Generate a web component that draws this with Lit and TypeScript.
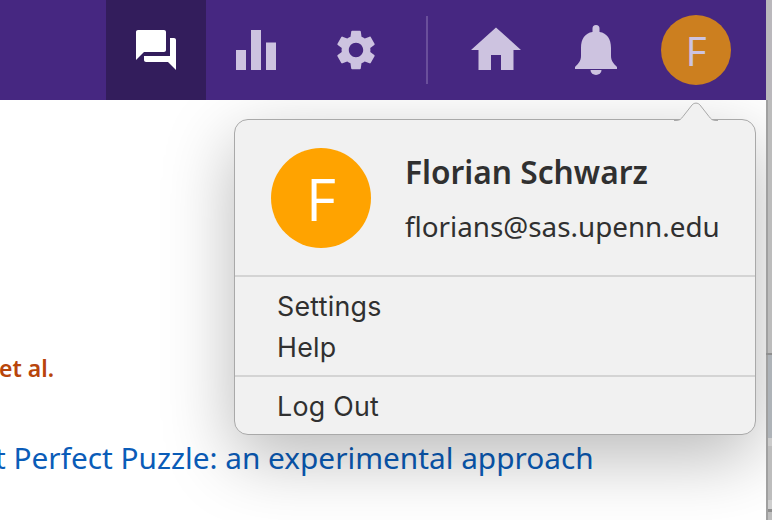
import { LitElement, html, css } from "lit";
import { customElement } from "lit/decorators.js";

@customElement("app-root")
export class AppRoot extends LitElement {
  static styles = css`
    :host { display: block; width: 772px; height: 520px; overflow: hidden; font-family: "Noto Sans", sans-serif; }
    .page { display: flex; width: 772px; height: 520px; position: relative; overflow: hidden; background: #fff; }
    .main { flex: 1; min-width: 0; display: flex; flex-direction: column; position: relative; }
    .strip { width: 6px; flex: none; position: relative; z-index: 3; display: flex; flex-direction: column; background: #bcbcbc; }
    .strip div { box-sizing: border-box; flex: none; border-left: 2px solid #a0a0a0; }
    .strip .top { height: 100px; background: #bab8bc; border-left: 0; }
    .strip .b1 { height: 253px; background: #bcbcbc; }
    .strip .b2 { height: 2px; background: #8f8f8f; border-left-color: #8f8f8f; }
    .strip .b3 { height: 83px; background: #aeb3b8; }
    .strip .b4 { height: 8px; background: #cbcbcb; }
    .strip .b5 { height: 54px; background: #bdbdbd; }
    .strip .b6 { height: 9px; background: #cfcfcf; }
    .strip .b7 { height: 3px; background: #8f8f8f; }
    .strip .b8 { flex: 1; background: #bdbdbd; }
    .nav { height: 100px; flex: none; background: #462781; display: flex; align-items: center; padding-left: 106px; position: relative; z-index: 2; }
    .tab { width: 100px; height: 100px; display: flex; align-items: center; justify-content: center; color: #cdc3e0; flex: none; }
    .tab.active { background: #331d5c; color: #fff; }
    .tab svg { display: block; fill: currentColor; }
    .sep { width: 2px; height: 68px; background: #6a4f9b; margin-left: 20px; margin-right: 18px; flex: none; }
    .avatar-small { width: 70px; height: 70px; border-radius: 50%; background: #cc7f1f; color: #cdc3e0; margin-left: 15px; display: flex; align-items: center; justify-content: center; font-size: 41px; font-weight: 400; font-family: "Open Sans", sans-serif; flex: none; }
    .content { flex: 1; position: relative; overflow: hidden; }
    .authors { margin: 254px 0 0 -1px; font-size: 23px; font-weight: 600; line-height: 28px; color: #b8450b; }
    .title { margin: 56px 0 0 -5px; font-size: 29.8px; line-height: 40px; white-space: nowrap; color: #0a5cb8; }
    .menu { position: absolute; left: 234px; top: 119px; width: 522px; height: 315.5px; box-sizing: border-box; background: #f1f1f1; border: 1px solid #a9a9a9; border-radius: 14px; box-shadow: 0 22px 70px rgba(0,0,0,.28); z-index: 1; color: #303030; display: flex; flex-direction: column; }
    .caret { position: absolute; left: 439px; top: -19px; display: block; }
    .head { height: 155px; flex: none; display: flex; align-items: flex-start; padding: 28px 0 0 36px; box-sizing: border-box; }
    .avatar { width: 100px; height: 100px; border-radius: 50%; background: #ffa300; color: #fff; display: flex; align-items: center; justify-content: center; font-size: 58px; font-weight: 400; font-family: "Open Sans", sans-serif; flex: none; }
    .who { margin-left: 34px; display: flex; flex-direction: column; }
    .name { font-size: 31.7px; font-weight: 600; line-height: 40px; margin-top: 4px; }
    .mail { font-size: 27.8px; line-height: 36px; margin-top: 16px; white-space: nowrap; }
    hr { height: 2px; border: 0; margin: 0; background: #d4d4d4; flex: none; }
    .items { font-family: Inter, sans-serif; font-size: 26.8px; letter-spacing: .25px; padding: 9px 0 0 42px; display: flex; flex-direction: column; }
    .items div { height: 41px; line-height: 41px; }
    .items.first { height: 98px; box-sizing: border-box; flex: none; }
  `;

  render() {
    return html`
      <div class="page">
        <div class="main">
          <nav class="nav">
            <div class="tab active">
              <svg width="48" height="48" viewBox="0 0 24 24"><path d="M21 6h-2v9H6v2c0 .55.45 1 1 1h11l4 4V7c0-.55-.45-1-1-1zm-4 6V3c0-.55-.45-1-1-1H3c-.55 0-1 .45-1 1v14l4-4h10c.55 0 1-.45 1-1z"/></svg>
            </div>
            <div class="tab">
              <svg width="40" height="40" viewBox="0 0 40 40"><rect x="0" y="20" width="10" height="20"/><rect x="15" y="0" width="10" height="40"/><rect x="30" y="12.5" width="10" height="27.5"/></svg>
            </div>
            <div class="tab">
              <svg width="48" height="48" viewBox="0 0 24 24"><path d="M19.14 12.94c.04-.3.06-.61.06-.94 0-.32-.02-.64-.07-.94l2.03-1.58c.18-.14.23-.41.12-.61l-1.92-3.32c-.12-.22-.37-.29-.59-.22l-2.39.96c-.5-.38-1.03-.7-1.62-.94l-.36-2.54c-.04-.24-.24-.41-.48-.41h-3.84c-.24 0-.43.17-.47.41l-.36 2.54c-.59.24-1.13.57-1.62.94l-2.39-.96c-.22-.08-.47 0-.59.22L2.74 8.87c-.12.21-.08.47.12.61l2.03 1.58c-.05.3-.09.63-.09.94s.02.64.07.94l-2.03 1.58c-.18.14-.23.41-.12.61l1.92 3.32c.12.22.37.29.59.22l2.39-.96c.5.38 1.03.7 1.62.94l.36 2.54c.05.24.24.41.48.41h3.84c.24 0 .44-.17.47-.41l.36-2.54c.59-.24 1.13-.56 1.62-.94l2.39.96c.22.08.47 0 .59-.22l1.92-3.32c.12-.22.07-.47-.12-.61l-2.01-1.58zM12 15.6c-1.98 0-3.6-1.62-3.6-3.6s1.62-3.6 3.6-3.6 3.6 1.62 3.6 3.6-1.62 3.6-3.6 3.6z"/></svg>
            </div>
            <div class="sep"></div>
            <div class="tab">
              <svg width="60" height="60" viewBox="0 0 24 24"><path d="M10 20v-6h4v6h5v-8h3L12 3 2 12h3v8z"/></svg>
            </div>
            <div class="tab">
              <svg width="42" height="50" viewBox="0 0 42 50"><path d="M21 0a3.500 3.500 0 0 1 3.500 3.500V7C32 8 36 14 36 23v8c0 5 3 8 6 11v2H0v-2c3-3 6-6 6-11v-8C6 14 10 8 17.500 7V3.500A3.500 3.500 0 0 1 21 0z"/><path d="M15.500 45h11a5.500 5 0 0 1-11 0z"/></svg>
            </div>
            <div class="avatar-small">F</div>
          </nav>
          <div class="content">
            <div class="authors">et al.</div>
            <div class="title">t Perfect Puzzle: an experimental approach</div>
          </div>
          <div class="menu">
            <svg class="caret" width="44" height="21" viewBox="0 0 44 21">
              <path d="M0 19.500H2C6 19.500 7 18 9 15.500L18 4C20 1.500 24 1.500 26 4L35 15.500C37 18 38 19.500 42 19.500H44V21H0z" fill="#f1f1f1"/>
              <path d="M0 19.500H2C6 19.500 7 18 9 15.500L18 4C20 1.500 24 1.500 26 4L35 15.500C37 18 38 19.500 42 19.500H44" fill="none" stroke="#a9a9a9" stroke-width="1"/>
            </svg>
            <div class="head">
              <div class="avatar">F</div>
              <div class="who">
                <div class="name">Florian Schwarz</div>
                <div class="mail">florians@sas.upenn.edu</div>
              </div>
            </div>
            <hr />
            <div class="items first">
              <div>Settings</div>
              <div>Help</div>
            </div>
            <hr />
            <div class="items">
              <div>Log Out</div>
            </div>
          </div>
        </div>
        <div class="strip">
          <div class="top"></div><div class="b1"></div><div class="b2"></div><div class="b3"></div><div class="b4"></div><div class="b5"></div><div class="b6"></div><div class="b7"></div><div class="b8"></div>
        </div>
      </div>
    `;
  }
}
